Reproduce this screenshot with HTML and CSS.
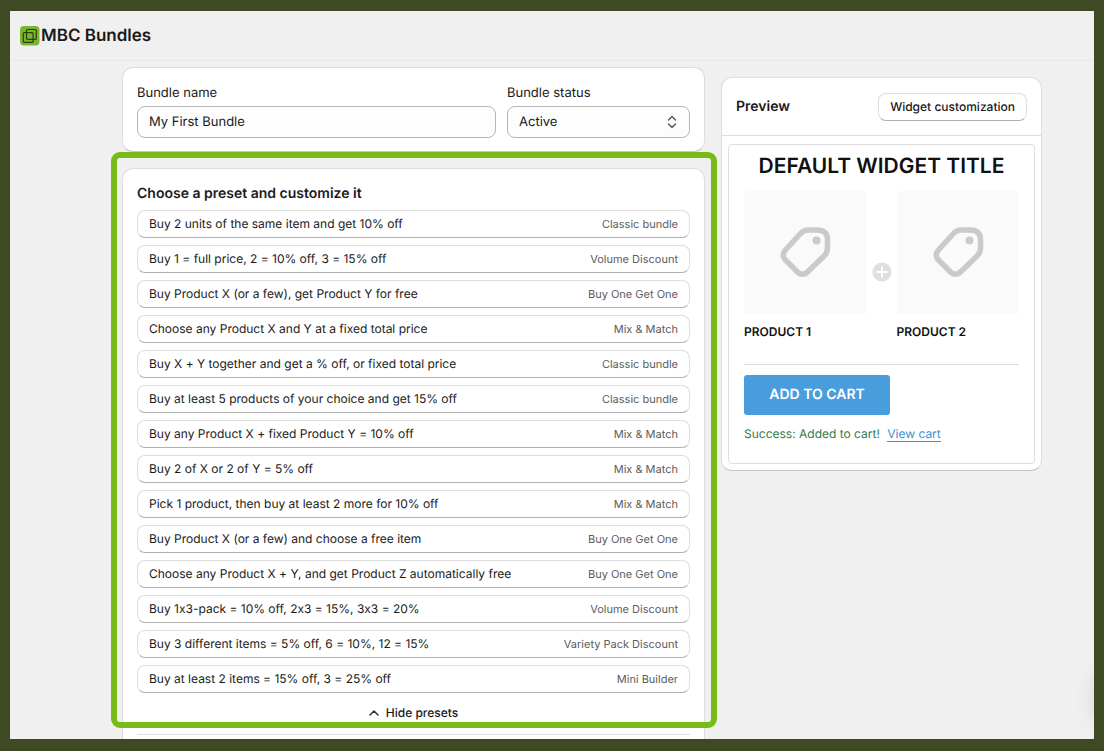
FILE: index.html
```html
<!DOCTYPE html>
<html lang="en">
<head>
  <meta charset="UTF-8">
  <meta name="viewport" content="width=device-width, initial-scale=1.0">
  <title>MBC Bundles</title>
  <link rel="stylesheet" href="styles.css">
</head>
<body>
  <div class="screen">
    <header class="app-header">
      <svg class="logo" viewBox="0 0 20 20" aria-hidden="true">
        <rect width="19.5" height="19.5" rx="4" fill="#7ab530"/>
        <g fill="none" stroke="#26400f" stroke-width="1.2">
          <rect x="6.5" y="3.5" width="9.8" height="9.8" rx="1"/>
          <rect x="3.3" y="6.6" width="9.8" height="9.8" rx="1"/>
        </g>
      </svg>
      <h1 class="app-title">MBC Bundles</h1>
    </header>

    <main class="layout">
      <div class="editor">
        <section class="card details">
          <div class="field field-name">
            <label for="bundle-name">Bundle name</label>
            <input type="text" id="bundle-name" class="control" value="My First Bundle">
          </div>
          <div class="field field-status">
            <label for="bundle-status">Bundle status</label>
            <div class="select-wrap">
              <select id="bundle-status" class="control">
                <option selected>Active</option>
                <option>Draft</option>
              </select>
              <svg class="select-icon" viewBox="0 0 10 14" aria-hidden="true">
                <path d="M1.5 5 5 1.5 8.5 5M1.5 9 5 12.5 8.5 9"/>
              </svg>
            </div>
          </div>
        </section>

        <section class="card presets">
          <div class="preset-group">
            <h2 class="heading">Choose a preset and customize it</h2>
            <div class="preset-list">
              <button type="button" class="preset"><span>Buy 2 units of the same item and get 10% off</span><span class="type">Classic bundle</span></button>
              <button type="button" class="preset"><span>Buy 1 = full price, 2 = 10% off, 3 = 15% off</span><span class="type">Volume Discount</span></button>
              <button type="button" class="preset"><span>Buy Product X (or a few), get Product Y for free</span><span class="type">Buy One Get One</span></button>
              <button type="button" class="preset"><span>Choose any Product X and Y at a fixed total price</span><span class="type">Mix &amp; Match</span></button>
              <button type="button" class="preset"><span>Buy X + Y together and get a % off, or fixed total price</span><span class="type">Classic bundle</span></button>
              <button type="button" class="preset"><span>Buy at least 5 products of your choice and get 15% off</span><span class="type">Classic bundle</span></button>
              <button type="button" class="preset"><span>Buy any Product X + fixed Product Y = 10% off</span><span class="type">Mix &amp; Match</span></button>
              <button type="button" class="preset"><span>Buy 2 of X or 2 of Y = 5% off</span><span class="type">Mix &amp; Match</span></button>
              <button type="button" class="preset"><span>Pick 1 product, then buy at least 2 more for 10% off</span><span class="type">Mix &amp; Match</span></button>
              <button type="button" class="preset"><span>Buy Product X (or a few) and choose a free item</span><span class="type">Buy One Get One</span></button>
              <button type="button" class="preset"><span>Choose any Product X + Y, and get Product Z automatically free</span><span class="type">Buy One Get One</span></button>
              <button type="button" class="preset"><span>Buy 1x3-pack = 10% off, 2x3 = 15%, 3x3 = 20%</span><span class="type">Volume Discount</span></button>
              <button type="button" class="preset"><span>Buy 3 different items = 5% off, 6 = 10%, 12 = 15%</span><span class="type">Variety Pack Discount</span></button>
              <button type="button" class="preset"><span>Buy at least 2 items = 15% off, 3 = 25% off</span><span class="type">Mini Builder</span></button>
            </div>
            <button type="button" class="toggle">
              <svg class="chevron" viewBox="0 0 10 6" aria-hidden="true"><path d="M1 5 5 1 9 5"/></svg>
              Hide presets
            </button>
          </div>
          <hr class="divider">
        </section>
      </div>

      <aside class="card preview">
        <div class="preview-header">
          <h2 class="heading">Preview</h2>
          <button type="button" class="customize">Widget customization</button>
        </div>
        <div class="widget">
          <h3 class="widget-title">DEFAULT WIDGET TITLE</h3>
          <div class="products">
            <div class="product">
              <div class="thumb">
                <svg class="tag" viewBox="0 0 52 52" aria-hidden="true">
                  <path d="M29 4H38Q48.5 4 48.5 14V22Q48.5 27 45 30L28 46.5Q23.5 50 19 46.5L6 33.5Q2.5 29 6 24.5L22 7Q25 4 29 4Z"/>
                  <circle cx="37.5" cy="14.5" r="4"/>
                </svg>
              </div>
              <p class="product-name">PRODUCT 1</p>
            </div>
            <svg class="plus" viewBox="0 0 20 20" aria-hidden="true">
              <circle cx="10" cy="10" r="9.6"/>
              <path d="M10 5v10M5 10h10"/>
            </svg>
            <div class="product">
              <div class="thumb">
                <svg class="tag" viewBox="0 0 52 52" aria-hidden="true">
                  <path d="M29 4H38Q48.5 4 48.5 14V22Q48.5 27 45 30L28 46.5Q23.5 50 19 46.5L6 33.5Q2.5 29 6 24.5L22 7Q25 4 29 4Z"/>
                  <circle cx="37.5" cy="14.5" r="4"/>
                </svg>
              </div>
              <p class="product-name">PRODUCT 2</p>
            </div>
          </div>
          <hr class="divider">
          <button type="button" class="add-to-cart">ADD TO CART</button>
          <p class="message">Success: Added to cart! <a href="#" class="view-cart">View cart</a></p>
        </div>
      </aside>
    </main>
  </div>
</body>
</html>
```
FILE: styles.css
```css
* {
  box-sizing: border-box;
}

body {
  margin: 0;
  height: 100vh;
  padding: 11px 10px 12px;
  background: #3d4a24;
  color: #1a1a1a;
  font-family: Inter, "Liberation Sans", sans-serif;
  font-size: 12px;
  line-height: 16px;
  font-variant-ligatures: no-contextual;
  text-rendering: geometricPrecision;
}

button,
input,
select {
  font: inherit;
  font-variant-ligatures: inherit;
  text-rendering: inherit;
  color: inherit;
}

h1,
h2,
h3,
p {
  margin: 0;
}

.screen {
  position: relative;
  height: 100%;
  overflow: hidden;
  background: #f0f0f0;
}

/* soft shadow at the right edge */
.screen::after {
  content: "";
  position: absolute;
  right: -30px;
  bottom: 16px;
  width: 28px;
  height: 50px;
  border-radius: 50%;
  box-shadow: 0 0 24px rgba(0, 0, 0, 0.15);
}

.app-header {
  display: flex;
  align-items: center;
  gap: 1px;
  height: 50px;
  padding: 0 10px;
  border-bottom: 1px solid #e8e8e8;
}

.logo {
  width: 20px;
  height: 20px;
}

.app-title {
  font-size: 17px;
  line-height: 24px;
  font-weight: 600;
}

.layout {
  display: flex;
  align-items: flex-start;
  gap: 16px;
  padding: 6px 52px 0 112px;
}

.editor {
  flex: 1;
  min-width: 0;
  display: flex;
  flex-direction: column;
  gap: 16px;
}

.card {
  background: #fff;
  border: 1px solid #dedede;
  border-bottom-color: #c6c6c6;
  border-radius: 11px;
}

.heading {
  font-size: 14px;
  line-height: 20px;
  font-weight: 600;
}

.divider {
  margin: 0;
  border: 0;
  border-top: 1px solid #dedede;
}

.details {
  display: flex;
  gap: 11px;
  padding: 17px 14px 13px;
}

.field {
  display: flex;
  flex-direction: column;
  gap: 5px;
  font-size: 13px;
}

.field-name {
  flex: 1;
}

.field-status {
  width: 183px;
}

.control {
  width: 100%;
  height: 32px;
  padding: 0 11px;
  background: #fdfdfd;
  border: 1px solid #b5b5b5;
  border-radius: 8px;
  appearance: none;
}

.select-wrap {
  position: relative;
}

.select-icon {
  position: absolute;
  top: 9px;
  right: 13px;
  width: 10px;
  height: 14px;
  fill: none;
  stroke: #555;
  stroke-width: 1.4;
  stroke-linecap: round;
  stroke-linejoin: round;
  pointer-events: none;
}

.presets {
  padding: 15px 14px 40px;
}

.preset-group {
  position: relative;
  padding-bottom: 8px;
}

/* green frame round the presets */
.preset-group::after {
  content: "";
  position: absolute;
  inset: -32px -27px 6px -26px;
  border: 6px solid #76bc16;
  border-radius: 9px;
  pointer-events: none;
}

.preset-list {
  display: flex;
  flex-direction: column;
  gap: 7px;
  padding: 6px 0 7px;
}

.preset {
  display: flex;
  justify-content: space-between;
  align-items: center;
  height: 28px;
  padding: 0 11px;
  text-align: left;
  background: #fff;
  border: 1px solid #dedede;
  border-bottom-color: #b0b0b0;
  border-radius: 8px;
  cursor: pointer;
}

.type {
  font-size: 11px;
  color: #5c5c5c;
}

.toggle {
  display: flex;
  align-items: center;
  gap: 7px;
  margin: 0 auto;
  padding: 5px 0;
  font-weight: 500;
  background: none;
  border: 0;
  cursor: pointer;
}

.chevron {
  width: 10px;
  height: 6px;
  fill: none;
  stroke: #303030;
  stroke-width: 1.5;
  stroke-linecap: round;
  stroke-linejoin: round;
}

.preview {
  width: 321px;
  margin-top: 10px;
}

.preview-header {
  display: flex;
  justify-content: space-between;
  align-items: center;
  height: 58px;
  padding: 0 14px;
  border-bottom: 1px solid #dedede;
}

.customize {
  height: 28px;
  padding: 0 11px;
  font-weight: 500;
  background: #fff;
  border: 1px solid #dedede;
  border-bottom-color: #b0b0b0;
  border-radius: 8px;
  cursor: pointer;
}

.widget {
  margin: 8px 6px 6px;
  padding: 8px 15px 21px;
  border: 1px solid #dedede;
  border-radius: 4px;
}

.widget-title {
  font-size: 21px;
  line-height: 28px;
  font-weight: 600;
  color: #111;
  text-align: center;
  white-space: nowrap;
}

.products {
  display: flex;
  gap: 5px;
  padding: 10px 0 24px;
}

.product {
  flex: 1;
}

.thumb {
  display: flex;
  align-items: center;
  justify-content: center;
  aspect-ratio: 1;
  background: #fafafa;
  border-radius: 3px;
}

.tag {
  width: 52px;
  height: 52px;
  fill: none;
  stroke: #cacaca;
  stroke-width: 5.5;
  stroke-linejoin: round;
}

.tag circle {
  fill: #cacaca;
  stroke: none;
}

.product-name {
  margin-top: 10px;
  font-weight: 600;
  color: #111;
}

.plus {
  align-self: center;
  margin-top: 14px;
  width: 20px;
  height: 20px;
  fill: #dedfe1;
  stroke: #fff;
  stroke-width: 2;
  stroke-linecap: round;
}

.plus circle {
  stroke: none;
}

.add-to-cart {
  display: block;
  width: 146px;
  height: 40px;
  margin: 10px 0 11px;
  padding: 0;
  font-size: 14px;
  font-weight: 600;
  color: #fff;
  background: #4a9ddc;
  border: 0;
  border-radius: 3px;
  cursor: pointer;
}

.message {
  color: #36794c;
}

.view-cart {
  margin-left: 4px;
  color: #4090cf;
  text-decoration: none;
  border-bottom: 1px solid #4090cf;
}
```
